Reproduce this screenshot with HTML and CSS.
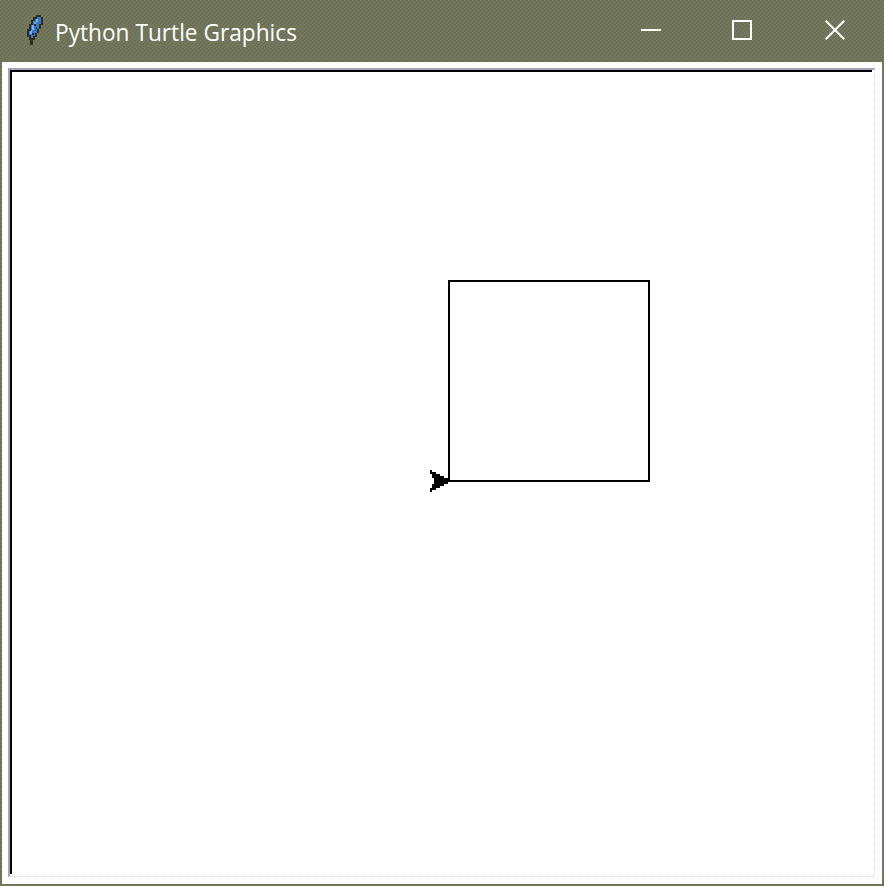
FILE: index.html
```html
<!DOCTYPE html>
<html lang="en">
<head>
<meta charset="utf-8">
<title>Python Turtle Graphics</title>
<link rel="stylesheet" href="styles.css">
</head>
<body>
<div class="window">
  <header class="titlebar">
    <svg class="feather" width="20" height="32" viewBox="0 0 20 32" shape-rendering="crispEdges">
      <path fill="#302e20" d="M12 0h5v2h2v8h-2v4h-2v4h-2v4h-2v3h-2v5H6v-5H5v-3H3v-8h2V9h2V5h2V2h3z"/>
      <path fill="#3977c5" d="M13 2h4v7h-2v5h-2v4h-2v3H9v2H7v-3H5v-6h2v-4h2V6h2V4h2z"/>
      <path fill="#73b4ee" d="M12 4h2v3h-2v4h-2v4H8v4H6v-4h2v-5h2V7h2z"/>
      <path fill="#14263f" d="M10 9h2v2h-2zM12 12h1v2h-1zM5 14h2v2H5zM8 18h2v2H8z"/>
    </svg>
    <svg class="title" width="260" height="40"><text x="0" y="27" textLength="242" lengthAdjust="spacingAndGlyphs">Python Turtle Graphics</text></svg>
    <div class="controls">
      <svg width="20" height="20" shape-rendering="crispEdges"><path d="M0 10h20"/></svg>
      <svg width="20" height="20" shape-rendering="crispEdges"><path d="M1 1h18v18H1z"/></svg>
      <svg width="20" height="20"><path d="M.7.7l18.6 18.6M19.3.7L.7 19.3"/></svg>
    </div>
  </header>
  <main class="client">
    <div class="frame">
      <svg class="canvas" width="862" height="804" shape-rendering="crispEdges">
        <path class="line" d="M437 209h200v200H437z"/>
        <path d="M418 398h2v2h4v2h4v2h4v2h4v2h2v2h-2v2h-4v2h-4v2h-4v2h-4v2h-2v-4h2v-4h2v-6h-2v-4h-2z"/>
      </svg>
    </div>
  </main>
</div>
</body>
</html>
```
FILE: styles.css
```css
* { box-sizing: border-box; }
body { margin: 0; overflow: hidden; }
.window {
  width: 884px;
  height: 886px;
  padding: 0 2px 2px;
  display: flex;
  flex-direction: column;
  background-color: #75735b;
  background-image:
    linear-gradient(135deg, rgba(130, 160, 88, .25) 25%, transparent 25% 50%, rgba(130, 160, 88, .25) 50% 75%, transparent 75%),
    conic-gradient(#667158 25%, #756c5f 0 50%, #667158 0 75%, #756c5f 0);
  background-size: 4px 4px, 2px 2px;
}
.titlebar {
  height: 62px;
  flex: none;
  display: flex;
  align-items: flex-start;
  color: #fff;
}
.feather { margin: 15px 0 0 22px; flex: none; }
.title { margin: 14px 0 0 11px; flex: none; }
.title text { font: 24px "Open Sans", "Noto Sans", sans-serif; fill: #fff; }
.controls {
  display: flex;
  margin: 20px 37px 0 auto;
}
.controls svg { fill: none; stroke: #fff; stroke-width: 2; margin-left: 71px; }
.controls svg:last-child { margin-left: 73px; }
.client { flex: 1; padding: 6px 8px 6px 6px; background: #fff; }
.frame {
  width: 867px;
  height: 809px;
  border: 2px solid #a5a4b7;
  border-right: 1px dotted #d5d5fa;
  border-bottom: 1px dotted #d5d5fa;
}
.canvas { display: block; border-left: 2px solid #000; border-top: 2px solid #000; }
.canvas .line { fill: none; stroke: #000; stroke-width: 2; }
```
